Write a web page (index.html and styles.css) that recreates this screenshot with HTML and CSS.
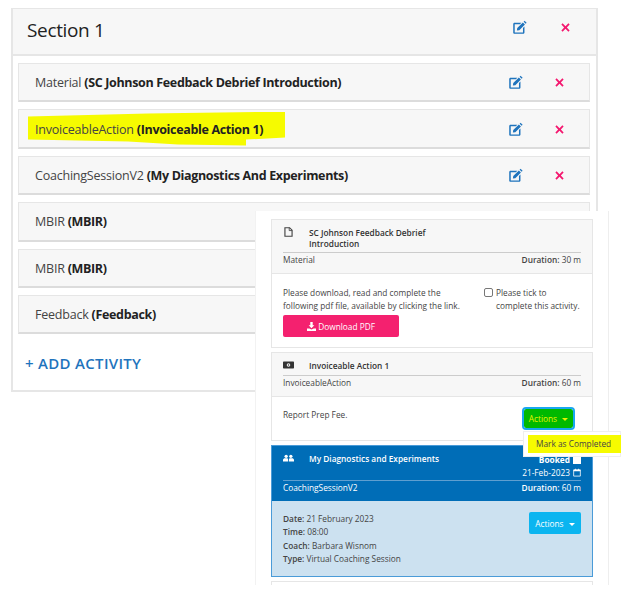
FILE: index.html
```html
<!DOCTYPE html>
<html lang="en">
<head>
    <meta charset="UTF-8">
    <title>Section 1</title>
    <link rel="stylesheet" href="styles.css">
</head>
<body>
    <div class="section">
        <div class="section-header">
            <h2>Section 1</h2>
            <div class="tools">
                <svg class="icon-edit" viewBox="0 0 16 16"><path d="M1.8 2.8h8.2L8.4 4.4H2.9v8.8h8.8V8.6l1.6-1.6v6.2c0 .9-.7 1.4-1.4 1.4H2.7c-.8 0-1.4-.6-1.4-1.4V4.2c0-.8.6-1.4 1.4-1.4z"/><path d="M11.6 2.6l2.2 2.2-6 6-2.6.4.4-2.6zM12.4 1.8l1-1 2.2 2.2-1 1z"/></svg>
                <svg class="icon-del" viewBox="0 0 10 10"><path d="M1.8.4L5 3.5 8.2.4l1.4 1.4L6.5 5l3.1 3.2-1.4 1.4L5 6.5 1.8 9.6.4 8.2 3.5 5 .4 1.8z"/></svg>
            </div>
        </div>
        <div class="activity-list">
            <div class="activity">
                <span>Material <b>(SC Johnson Feedback Debrief Introduction)</b></span>
                <div class="tools">
                    <svg class="icon-edit" viewBox="0 0 16 16"><path d="M1.8 2.8h8.2L8.4 4.4H2.9v8.8h8.8V8.6l1.6-1.6v6.2c0 .9-.7 1.4-1.4 1.4H2.7c-.8 0-1.4-.6-1.4-1.4V4.2c0-.8.6-1.4 1.4-1.4z"/><path d="M11.6 2.6l2.2 2.2-6 6-2.6.4.4-2.6zM12.4 1.8l1-1 2.2 2.2-1 1z"/></svg>
                    <svg class="icon-del" viewBox="0 0 10 10"><path d="M1.8.4L5 3.5 8.2.4l1.4 1.4L6.5 5l3.1 3.2-1.4 1.4L5 6.5 1.8 9.6.4 8.2 3.5 5 .4 1.8z"/></svg>
                </div>
            </div>
            <div class="activity">
                <span class="marked"><i class="marker"></i><span class="marked-text">InvoiceableAction <b>(Invoiceable Action 1)</b></span></span>
                <div class="tools">
                    <svg class="icon-edit" viewBox="0 0 16 16"><path d="M1.8 2.8h8.2L8.4 4.4H2.9v8.8h8.8V8.6l1.6-1.6v6.2c0 .9-.7 1.4-1.4 1.4H2.7c-.8 0-1.4-.6-1.4-1.4V4.2c0-.8.6-1.4 1.4-1.4z"/><path d="M11.6 2.6l2.2 2.2-6 6-2.6.4.4-2.6zM12.4 1.8l1-1 2.2 2.2-1 1z"/></svg>
                    <svg class="icon-del" viewBox="0 0 10 10"><path d="M1.8.4L5 3.5 8.2.4l1.4 1.4L6.5 5l3.1 3.2-1.4 1.4L5 6.5 1.8 9.6.4 8.2 3.5 5 .4 1.8z"/></svg>
                </div>
            </div>
            <div class="activity">
                <span>CoachingSessionV2 <b>(My Diagnostics And Experiments)</b></span>
                <div class="tools">
                    <svg class="icon-edit" viewBox="0 0 16 16"><path d="M1.8 2.8h8.2L8.4 4.4H2.9v8.8h8.8V8.6l1.6-1.6v6.2c0 .9-.7 1.4-1.4 1.4H2.7c-.8 0-1.4-.6-1.4-1.4V4.2c0-.8.6-1.4 1.4-1.4z"/><path d="M11.6 2.6l2.2 2.2-6 6-2.6.4.4-2.6zM12.4 1.8l1-1 2.2 2.2-1 1z"/></svg>
                    <svg class="icon-del" viewBox="0 0 10 10"><path d="M1.8.4L5 3.5 8.2.4l1.4 1.4L6.5 5l3.1 3.2-1.4 1.4L5 6.5 1.8 9.6.4 8.2 3.5 5 .4 1.8z"/></svg>
                </div>
            </div>
            <div class="activity"><span>MBIR <b>(MBIR)</b></span></div>
            <div class="activity"><span>MBIR <b>(MBIR)</b></span></div>
            <div class="activity"><span>Feedback <b>(Feedback)</b></span></div>
        </div>
        <a class="add-activity">+ <span>ADD ACTIVITY</span></a>
    </div>

    <div class="preview">
        <div class="card">
            <div class="card-header material-header">
                <div class="card-title">
                    <svg class="type-icon file" viewBox="0 0 12 14"><path d="M1 1h6.5L11 4.5V13H1z" fill="none" stroke="#444" stroke-width="1.6"/><path d="M7 1v4h4" fill="none" stroke="#444" stroke-width="1.2"/></svg>
                    <strong>SC Johnson Feedback Debrief<br>Introduction</strong>
                </div>
                <div class="card-meta">
                    <span>Material</span>
                    <span><b>Duration:</b> 30 m</span>
                </div>
            </div>
            <div class="card-body material">
                <div class="material-left">
                    <p>Please download, read and complete the following pdf file, available by clicking the link.</p>
                    <button class="btn-pink">
                        <svg viewBox="0 0 12 12"><path d="M4.4 0h3.2v4.4h2.2L6 8.2 2.2 4.4h2.2zM0 8.6h3.2L6 10l2.8-1.4H12V12H0z"/></svg>
                        Download PDF
                    </button>
                </div>
                <label class="tick"><span class="box"></span><span>Please tick to<br>complete this activity.</span></label>
            </div>
        </div>

        <div class="card">
            <div class="card-header action-header">
                <div class="card-title">
                    <svg class="type-icon money" viewBox="0 0 16 10"><rect width="16" height="10" rx="1" fill="#333"/><circle cx="8" cy="5" r="2.6" fill="#eee"/><circle cx="8" cy="5" r="1" fill="#333"/></svg>
                    <strong>Invoiceable Action 1</strong>
                </div>
                <div class="card-meta">
                    <span>InvoiceableAction</span>
                    <span><b>Duration:</b> 60 m</span>
                </div>
            </div>
            <div class="card-body action-body">
                <p>Report Prep Fee.</p>
                <div class="action-menu">
                    <button class="btn-green">Actions <i class="caret"></i></button>
                    <div class="dropdown"><span>Mark as Completed</span></div>
                </div>
            </div>
        </div>

        <div class="card booked">
            <div class="card-header">
                <div class="booked-top">
                    <div class="card-title">
                        <svg class="type-icon users" viewBox="0 0 16 10"><circle cx="4.6" cy="2.6" r="2.4" fill="#fff"/><circle cx="11.4" cy="2.6" r="2.4" fill="#fff"/><path d="M0 10V8c0-1.6 1.6-2.6 3-2.6h3.2C7 5.4 7.4 6.6 7.4 8v2zM8.6 10V8c0-1.4.4-2.6 1.2-2.6H13c1.4 0 3 1 3 2.6v2z" fill="#fff"/></svg>
                        <strong>My Diagnostics and Experiments</strong>
                    </div>
                    <div class="booked-status">
                        <div class="status-line"><b>Booked</b><i class="white-box"></i></div>
                        <div class="status-line">21-Feb-2023
                            <svg class="calendar" viewBox="0 0 12 12"><path d="M1 2h10v9.4H1z" fill="none" stroke="#fff" stroke-width="1.2"/><path d="M1 2h10v2H1zM3 .4h1.2V2H3zM7.8.4H9V2H7.8z" fill="#fff"/></svg>
                        </div>
                    </div>
                </div>
                <div class="card-meta">
                    <span>CoachingSessionV2</span>
                    <span><b>Duration:</b> 60 m</span>
                </div>
            </div>
            <div class="card-body booked-body">
                <div class="details">
                    <div><b>Date:</b> 21 February 2023</div>
                    <div><b>Time:</b> 08:00</div>
                    <div><b>Coach:</b> Barbara Wisnom</div>
                    <div><b>Type:</b> Virtual Coaching Session</div>
                </div>
                <button class="btn-blue">Actions <i class="caret"></i></button>
            </div>
        </div>

        <div class="card sliver"></div>
    </div>
</body>
</html>
```

FILE: styles.css
```css
* {
    box-sizing: border-box;
}
html, body {
    height: 601px;
    overflow: hidden;
}
body {
    margin: 0;
    padding: 8px 26px 0 11px;
    background: #fff;
    color: #333;
    font-family: "Open Sans", "Noto Sans", sans-serif;
}
.section {
    height: 384px;
    border: 2px solid #e6e6e6;
    border-top-width: 1px;
}
.section-header {
    height: 47px;
    padding: 0 26px 4px 14px;
    display: flex;
    justify-content: space-between;
    align-items: center;
    background: #f7f7f7;
    border-bottom: 2px solid #e6e6e6;
}
.section-header h2 {
    margin: 0;
    font-size: 19px;
    font-weight: 400;
    letter-spacing: -0.35px;
    color: #222;
}
.section-header .tools {
    gap: 34px;
    margin-top: -4px;
}
.tools {
    display: flex;
    align-items: center;
    gap: 32px;
}
.icon-edit {
    width: 15px;
    height: 15px;
    fill: #1f74bd;
}
.icon-del {
    width: 9px;
    height: 9px;
    fill: #f4186f;
}
.activity-list {
    padding: 7px 6px 0 5px;
    display: flex;
    flex-direction: column;
    gap: 7px;
}
.activity {
    height: 39.4px;
    padding: 1px 25px 0 16px;
    display: flex;
    justify-content: space-between;
    align-items: center;
    background: #f7f7f7;
    border: 1px solid #e6e6e6;
    border-bottom: 2px solid #dcdcdc;
    font-size: 12.5px;
    letter-spacing: -0.22px;
    color: #444;
}
.activity b {
    color: #222;
    letter-spacing: -0.34px;
}
.marked {
    position: relative;
}
.marker {
    position: absolute;
    left: -7px;
    top: -9px;
    width: 257px;
    height: 34px;
    background: #f6fb00;
    clip-path: polygon(0 5px, 120px 2px, 257px 0, 257px 26px, 218px 28px, 218px 34px, 150px 33px, 100px 30px, 0 28px);
}
.marked-text {
    position: relative;
}
.add-activity {
    display: block;
    margin: 19px 0 0 12px;
    color: #1f74bd;
    font-size: 15px;
    font-weight: 600;
    letter-spacing: 0.3px;
}

.preview {
    position: absolute;
    left: 255px;
    top: 211px;
    width: 354px;
    height: 374px;
    padding: 8px 15px 0 15px;
    background: #fff;
    border-left: 1px solid #f2f2f2;
    border-right: 1px solid #eee;
    display: flex;
    flex-direction: column;
    gap: 4px;
    font-size: 8.3px;
    color: #444;
}
.card {
    border: 1px solid #e6e6e6;
}
.card-header {
    padding: 0 11px;
    background: #f7f7f7;
    border-bottom: 1px solid #e6e6e6;
}
.material-header {
    height: 54px;
}
.material-header .card-title {
    height: 33px;
}
.action-header {
    height: 44px;
}
.action-header .card-title {
    height: 23px;
}
.card-title {
    display: flex;
    align-items: flex-start;
    padding-top: 7px;
    color: #333;
    line-height: 11px;
    border-bottom: 1px solid #ccc;
}
.card-title strong {
    font-weight: 600;
}
.type-icon {
    width: 26px;
    flex: none;
    padding-right: 15px;
    height: 10px;
}
.card-meta {
    display: flex;
    justify-content: space-between;
    padding-top: 1px;
    line-height: 12px;
}
.card-meta b {
    font-weight: 600;
}
.card-body p {
    margin: 0;
    line-height: 13px;
}
.material {
    height: 73px;
    padding: 12px 11px 0;
    display: flex;
    justify-content: space-between;
}
.material-left {
    width: 186px;
}
.btn-pink, .btn-green, .btn-blue {
    border: none;
    border-radius: 2px;
    color: #fff;
    font: inherit;
    padding: 0;
    white-space: nowrap;
}
.btn-pink {
    display: block;
    width: 116px;
    height: 22px;
    margin-top: 3px;
    background: #f4216f;
}
.btn-pink svg {
    width: 9px;
    height: 9px;
    fill: #fff;
    vertical-align: -1px;
}
.tick {
    display: flex;
    width: 97px;
    gap: 3px;
    line-height: 13px;
    white-space: nowrap;
}
.box {
    flex: none;
    width: 9px;
    height: 9px;
    margin-top: 2px;
    border: 1px solid #777;
    border-radius: 2px;
    background: #fff;
}
.action-body {
    height: 43px;
    padding: 11px 11px 0;
    display: flex;
    justify-content: space-between;
    align-items: flex-start;
}
.action-menu {
    position: relative;
    margin: 1px 8px 0 0;
}
.btn-green {
    display: block;
    width: 49px;
    height: 19px;
    background: #00b900;
    color: #e8f200;
    outline: 2px solid #19a7f0;
}
.caret {
    display: inline-block;
    margin-left: 3px;
    vertical-align: 1px;
    border-top: 3px solid currentColor;
    border-left: 3px solid transparent;
    border-right: 3px solid transparent;
}
.dropdown {
    position: absolute;
    left: -1px;
    top: 22px;
    width: 98px;
    height: 26px;
    z-index: 2;
    padding: 3px 0 0 4px;
    background: #fff;
    border: 1px solid #eee;
}
.dropdown span {
    display: block;
    height: 18px;
    width: 93px;
    padding-left: 8px;
    background: #f6fb00;
    line-height: 17px;
    white-space: nowrap;
}
.card.booked {
    border-color: #4a9bd8;
}
.booked .card-header {
    background: #006db7;
    color: #fff;
    border-bottom: none;
    height: 55px;
}
.booked .card-title {
    color: #fff;
    border-bottom: none;
}
.booked-top {
    height: 35px;
    display: flex;
    justify-content: space-between;
    border-bottom: 1px solid #5f9fd0;
}
.booked-status {
    padding-top: 7px;
    line-height: 13px;
    text-align: right;
}
.status-line {
    display: flex;
    justify-content: flex-end;
    align-items: center;
    gap: 3px;
}
.status-line b {
    font-weight: 700;
}
.white-box {
    width: 8px;
    height: 8px;
    background: #fff;
}
.calendar {
    width: 8px;
    height: 9px;
}
.booked-body {
    height: 75px;
    padding: 11px 11px 0;
    background: #cce1f0;
    display: flex;
    justify-content: space-between;
    align-items: flex-start;
}
.details {
    line-height: 13.3px;
}
.details b {
    font-weight: 600;
}
.btn-blue {
    width: 52px;
    height: 22px;
    background: #0bb5f0;
}
.sliver {
    height: 4px;
    border-bottom: none;
}
```
